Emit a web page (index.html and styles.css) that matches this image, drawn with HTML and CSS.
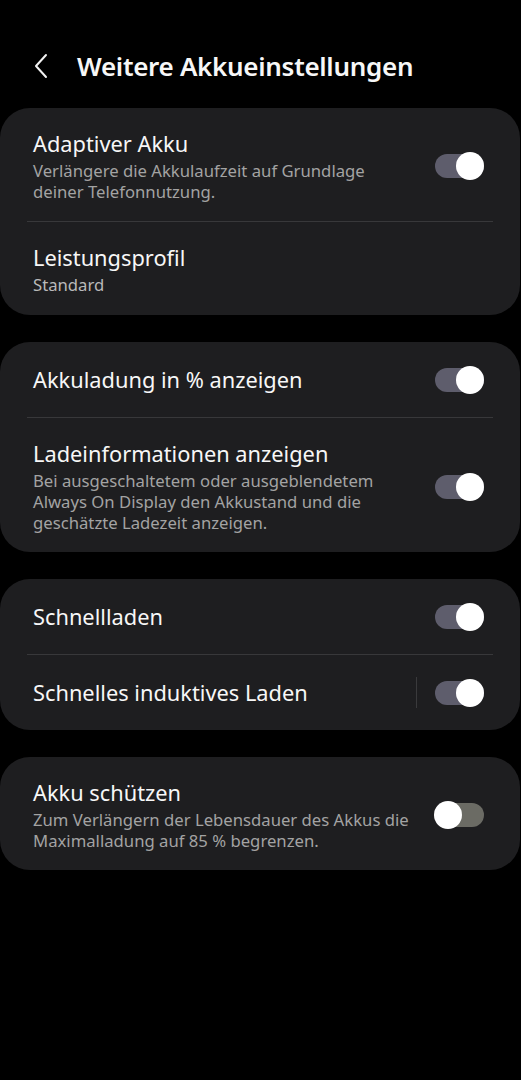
FILE: index.html
```html
<!doctype html>
<html lang="de">
    <head>
        <meta charset="UTF-8" />
        <meta name="viewport" content="width=device-width, initial-scale=1.0" />
        <title>Weitere Akkueinstellungen</title>
        <link rel="stylesheet" href="styles.css">
    </head>
    <body>
        <header class="top-bar">
            <svg class="back" width="16" height="26" viewBox="0 0 16 26">
                <path d="M13 2 L3 13 L13 24" fill="none" stroke="#f2f2f2" stroke-width="2" stroke-linecap="round" stroke-linejoin="round" />
            </svg>
            <h1>Weitere Akkueinstellungen</h1>
        </header>

        <section class="card">
            <div class="row">
                <div class="text">
                    <div class="title">Adaptiver Akku</div>
                    <div class="sub">Verlängere die Akkulaufzeit auf Grundlage deiner Telefonnutzung.</div>
                </div>
                <span class="switch on"></span>
            </div>
            <div class="divider"></div>
            <div class="row short">
                <div class="text">
                    <div class="title">Leistungsprofil</div>
                    <div class="sub value">Standard</div>
                </div>
            </div>
        </section>

        <section class="card">
            <div class="row single">
                <div class="text">
                    <div class="title">Akkuladung in % anzeigen</div>
                </div>
                <span class="switch on"></span>
            </div>
            <div class="divider"></div>
            <div class="row">
                <div class="text">
                    <div class="title">Ladeinformationen anzeigen</div>
                    <div class="sub">Bei ausgeschaltetem oder ausgeblendetem Always On Display den Akkustand und die geschätzte Ladezeit anzeigen.</div>
                </div>
                <span class="switch on"></span>
            </div>
        </section>

        <section class="card">
            <div class="row single">
                <div class="text">
                    <div class="title">Schnellladen</div>
                </div>
                <span class="switch on"></span>
            </div>
            <div class="divider"></div>
            <div class="row single">
                <div class="text">
                    <div class="title">Schnelles induktives Laden</div>
                </div>
                <span class="vline"></span>
                <span class="switch on"></span>
            </div>
        </section>

        <section class="card">
            <div class="row">
                <div class="text">
                    <div class="title">Akku schützen</div>
                    <div class="sub">Zum Verlängern der Lebensdauer des Akkus die Maximalladung auf 85 % begrenzen.</div>
                </div>
                <span class="switch"></span>
            </div>
        </section>
    </body>
</html>
```

FILE: styles.css
```css
body {
    margin: 0;
    background: #000;
    color: #f7f7f7;
    font-family: "Noto Sans", Roboto, sans-serif;
}
.top-bar {
    display: flex;
    align-items: center;
    height: 66px;
    padding: 33px 0 9px 33px;
}
.back {
    display: block;
}
.top-bar h1 {
    margin: 0 0 0 28px;
    font-size: 26px;
    font-weight: 600;
    letter-spacing: -0.3px;
}
.card {
    background: #1e1e20;
    border-radius: 30px;
    margin: 0 1px 27px 0;
}
.row {
    display: flex;
    align-items: center;
    padding: 22px 36px 19px 33px;
}
.row.short {
    padding-bottom: 20px;
}
.row.single {
    min-height: 75px;
    padding-top: 0;
    padding-bottom: 0;
    box-sizing: border-box;
}
.text {
    flex: 1;
}
.title {
    font-size: 21.8px;
    line-height: 28px;
}
.sub {
    margin-top: 2px;
    font-size: 16.7px;
    line-height: 21px;
    color: #a3a3a3;
    padding-right: 20px;
}
.sub.value {
    color: #b9b9b9;
}
.divider {
    height: 1px;
    margin: 0 27px;
    background: #38383a;
}
.vline {
    width: 1px;
    height: 31px;
    background: #3a3a3c;
    margin-right: 18px;
}
.switch {
    position: relative;
    flex: none;
    width: 49px;
    height: 24px;
    border-radius: 12px;
    background: #6b6b64;
}
.switch::after {
    content: "";
    position: absolute;
    top: -2px;
    left: -1px;
    width: 28px;
    height: 28px;
    border-radius: 50%;
    background: #fff;
}
.switch.on {
    background: #5e5d6c;
}
.switch.on::after {
    left: auto;
    right: 0;
}
```
